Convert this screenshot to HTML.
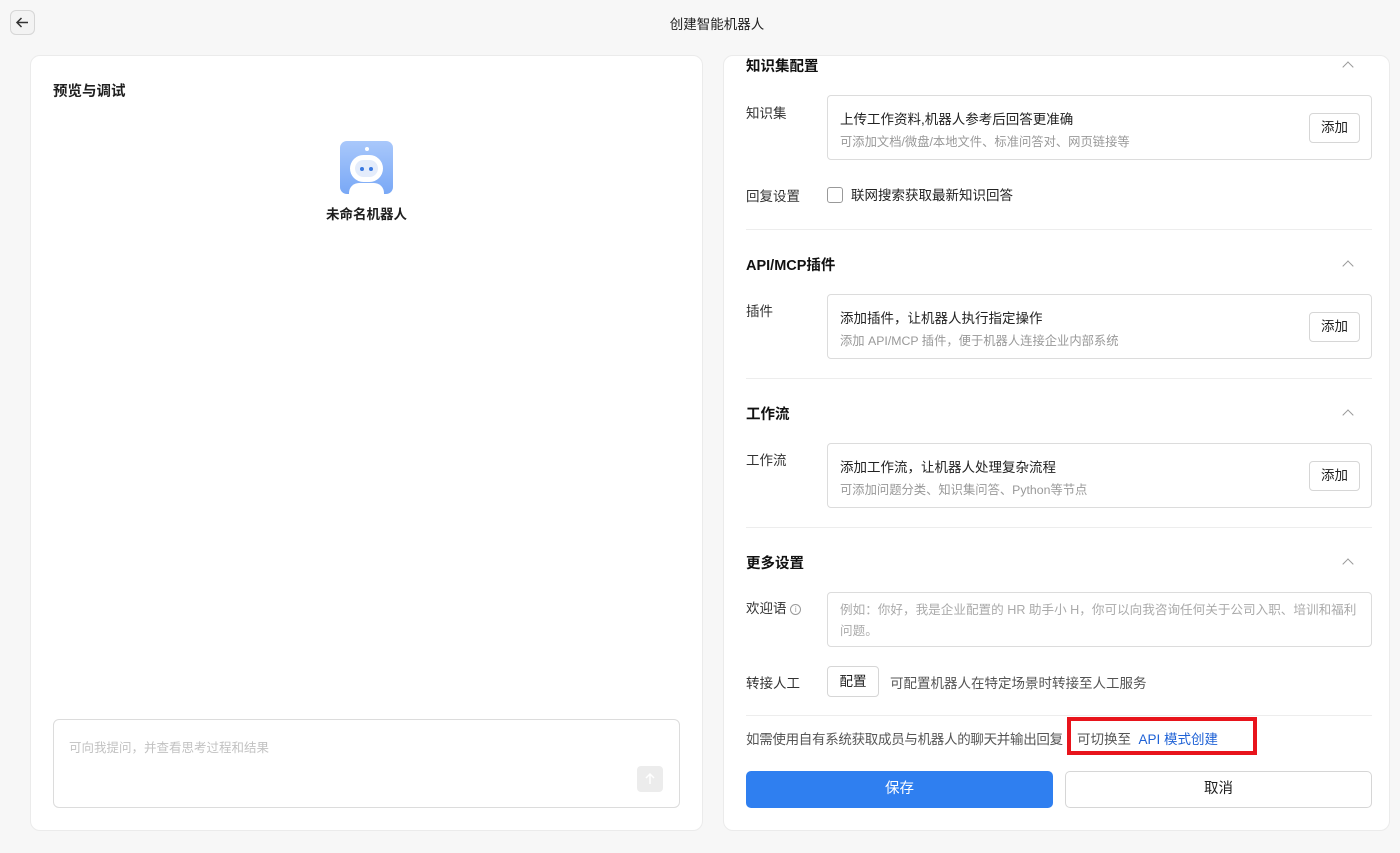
<!DOCTYPE html>
<html><head><meta charset="utf-8"><style>
*{box-sizing:border-box;margin:0;padding:0}
body{width:1400px;height:853px;background:#f7f7f7;font-family:"Liberation Sans","Noto Sans CJK SC",sans-serif;color:#1f1f1f;position:relative;overflow:hidden;font-size:13.5px}
.a{position:absolute}
.panel{position:absolute;background:#fff;border:1px solid #ebebeb;border-radius:10px}
.h{position:absolute;left:746px;font-size:14.5px;font-weight:bold;color:#111}
.chev{position:absolute;left:1344px;width:8px;height:8px;border-left:1.3px solid #999;border-top:1.3px solid #999;transform:rotate(45deg)}
.lab{position:absolute;left:746px;font-size:13.5px;color:#333}
.box{position:absolute;left:827px;width:545px;border:1px solid #dcdcdc;border-radius:4px;background:#fff}
.box .t{position:absolute;left:12px;top:12px;font-size:13.5px;color:#222}
.box .s{position:absolute;left:12px;top:36px;font-size:12.3px;color:#999}
.btn{position:absolute;right:11px;top:17px;width:51px;height:30px;border:1px solid #d6d6d6;border-radius:4px;font-size:13.5px;text-align:center;line-height:28px;color:#222;background:#fff}
.sep{position:absolute;left:746px;width:626px;height:1px;background:#ededed}
</style></head><body>
<div class="a" style="left:10px;top:10px;width:25px;height:25px;border:1px solid #d6d6d6;border-radius:6px;background:#f3f3f3">
<svg width="23" height="23" viewBox="0 0 23 23"><path d="M17 11.5H6M10.5 7L6 11.5L10.5 16" stroke="#333" stroke-width="1.5" fill="none"/></svg></div>
<div class="a" style="left:0;top:13px;text-align:center;font-size:13.5px;color:#222;width:1434px">创建智能机器人</div>

<div class="panel" style="left:30px;top:55px;width:673px;height:776px"></div>
<div class="a" style="left:53px;top:80px;font-size:14.5px;font-weight:bold">预览与调试</div>
<div class="a" style="left:340px;top:141px;width:53px;height:53px;border-radius:7px;background:linear-gradient(#a9c8fb,#79a8f6);overflow:hidden">
<div class="a" style="left:10px;top:14px;width:33px;height:27px;border-radius:14px;background:#fff"></div>
<div class="a" style="left:15px;top:19px;width:23px;height:17px;border-radius:9px;background:#e4ecfb"></div>
<div class="a" style="left:20px;top:26px;width:4px;height:4px;border-radius:2px;background:#3a78e0"></div>
<div class="a" style="left:29px;top:26px;width:4px;height:4px;border-radius:2px;background:#3a78e0"></div>
<div class="a" style="left:25px;top:6px;width:4px;height:4px;border-radius:2px;background:#fff"></div>
<div class="a" style="left:9px;top:42px;width:35px;height:20px;border-radius:17px;background:#fff"></div>
</div>
<div class="a" style="left:300px;width:133px;top:203px;text-align:center;font-size:13.5px;font-weight:bold">未命名机器人</div>
<div class="a" style="left:53px;top:719px;width:627px;height:89px;border:1px solid #dcdcdc;border-radius:6px;background:#fff"></div>
<div class="a" style="left:69px;top:737px;font-size:12.5px;color:#c2c2c2">可向我提问，并查看思考过程和结果</div>
<div class="a" style="left:637px;top:766px;width:26px;height:26px;border-radius:4px;background:#ececec"><svg width="26" height="26"><path d="M13 18V8M9 12L13 8L17 12" stroke="#fff" stroke-width="1.5" fill="none"/></svg></div>

<div class="panel" style="left:723px;top:55px;width:667px;height:776px"></div>
<div class="h" style="top:55px">知识集配置</div><div class="chev" style="top:63px"></div>
<div class="lab" style="top:102px">知识集</div>
<div class="box" style="top:95px;height:65px"><div class="t">上传工作资料,机器人参考后回答更准确</div><div class="s">可添加文档/微盘/本地文件、标准问答对、网页链接等</div><div class="btn">添加</div></div>
<div class="lab" style="top:185px">回复设置</div>
<div class="a" style="left:827px;top:187px;width:16px;height:16px;border:1px solid #999;border-radius:3px"></div>
<div class="a" style="left:851px;top:184px;font-size:13.5px;color:#222">联网搜索获取最新知识回答</div>
<div class="sep" style="top:229px"></div>
<div class="h" style="top:254px">API/MCP插件</div><div class="chev" style="top:262px"></div>
<div class="lab" style="top:300px">插件</div>
<div class="box" style="top:294px;height:65px"><div class="t">添加插件，让机器人执行指定操作</div><div class="s">添加 API/MCP 插件，便于机器人连接企业内部系统</div><div class="btn">添加</div></div>
<div class="sep" style="top:378px"></div>
<div class="h" style="top:403px">工作流</div><div class="chev" style="top:411px"></div>
<div class="lab" style="top:449px">工作流</div>
<div class="box" style="top:443px;height:65px"><div class="t">添加工作流，让机器人处理复杂流程</div><div class="s">可添加问题分类、知识集问答、Python等节点</div><div class="btn">添加</div></div>
<div class="sep" style="top:527px"></div>
<div class="h" style="top:552px">更多设置</div><div class="chev" style="top:560px"></div>
<div class="lab" style="top:597px">欢迎语 <span style="display:inline-block;width:11px;height:11px;border:1px solid #999;border-radius:50%;font-size:8px;line-height:9px;text-align:center;color:#999;vertical-align:1px">i</span></div>
<div class="box" style="top:592px;height:55px"><div class="a" style="left:12px;top:7px;width:525px;font-size:12.6px;line-height:21px;color:#aaa">例如：你好，我是企业配置的 HR 助手小 H，你可以向我咨询任何关于公司入职、培训和福利问题。</div></div>
<div class="lab" style="top:672px">转接人工</div>
<div class="a" style="left:827px;top:666px;width:52px;height:31px;border:1px solid #d6d6d6;border-radius:4px;text-align:center;line-height:29px;font-size:13.5px">配置</div>
<div class="a" style="left:890px;top:672px;font-size:13.5px;color:#555">可配置机器人在特定场景时转接至人工服务</div>
<div class="sep" style="top:715px"></div>
<div class="a" style="left:746px;top:728px;font-size:13.5px;color:#555;letter-spacing:-0.3px">如需使用自有系统获取成员与机器人的聊天并输出回复</div>
<div class="a" style="left:1067px;top:717px;width:190px;height:38px;border:4px solid #e8141c;background:#fff"></div>
<div class="a" style="left:1077px;top:728px;font-size:13.5px;color:#555">可切换至 <span style="color:#1f62d6">&nbsp;API 模式创建</span></div>
<div class="a" style="left:746px;top:771px;width:307px;height:37px;background:#2f7ff0;border-radius:5px;color:#fff;text-align:center;line-height:37px;font-size:14.5px">保存</div>
<div class="a" style="left:1065px;top:771px;width:307px;height:37px;border:1px solid #d6d6d6;border-radius:5px;background:#fff;text-align:center;line-height:35px;font-size:14.5px">取消</div>
</body></html>
